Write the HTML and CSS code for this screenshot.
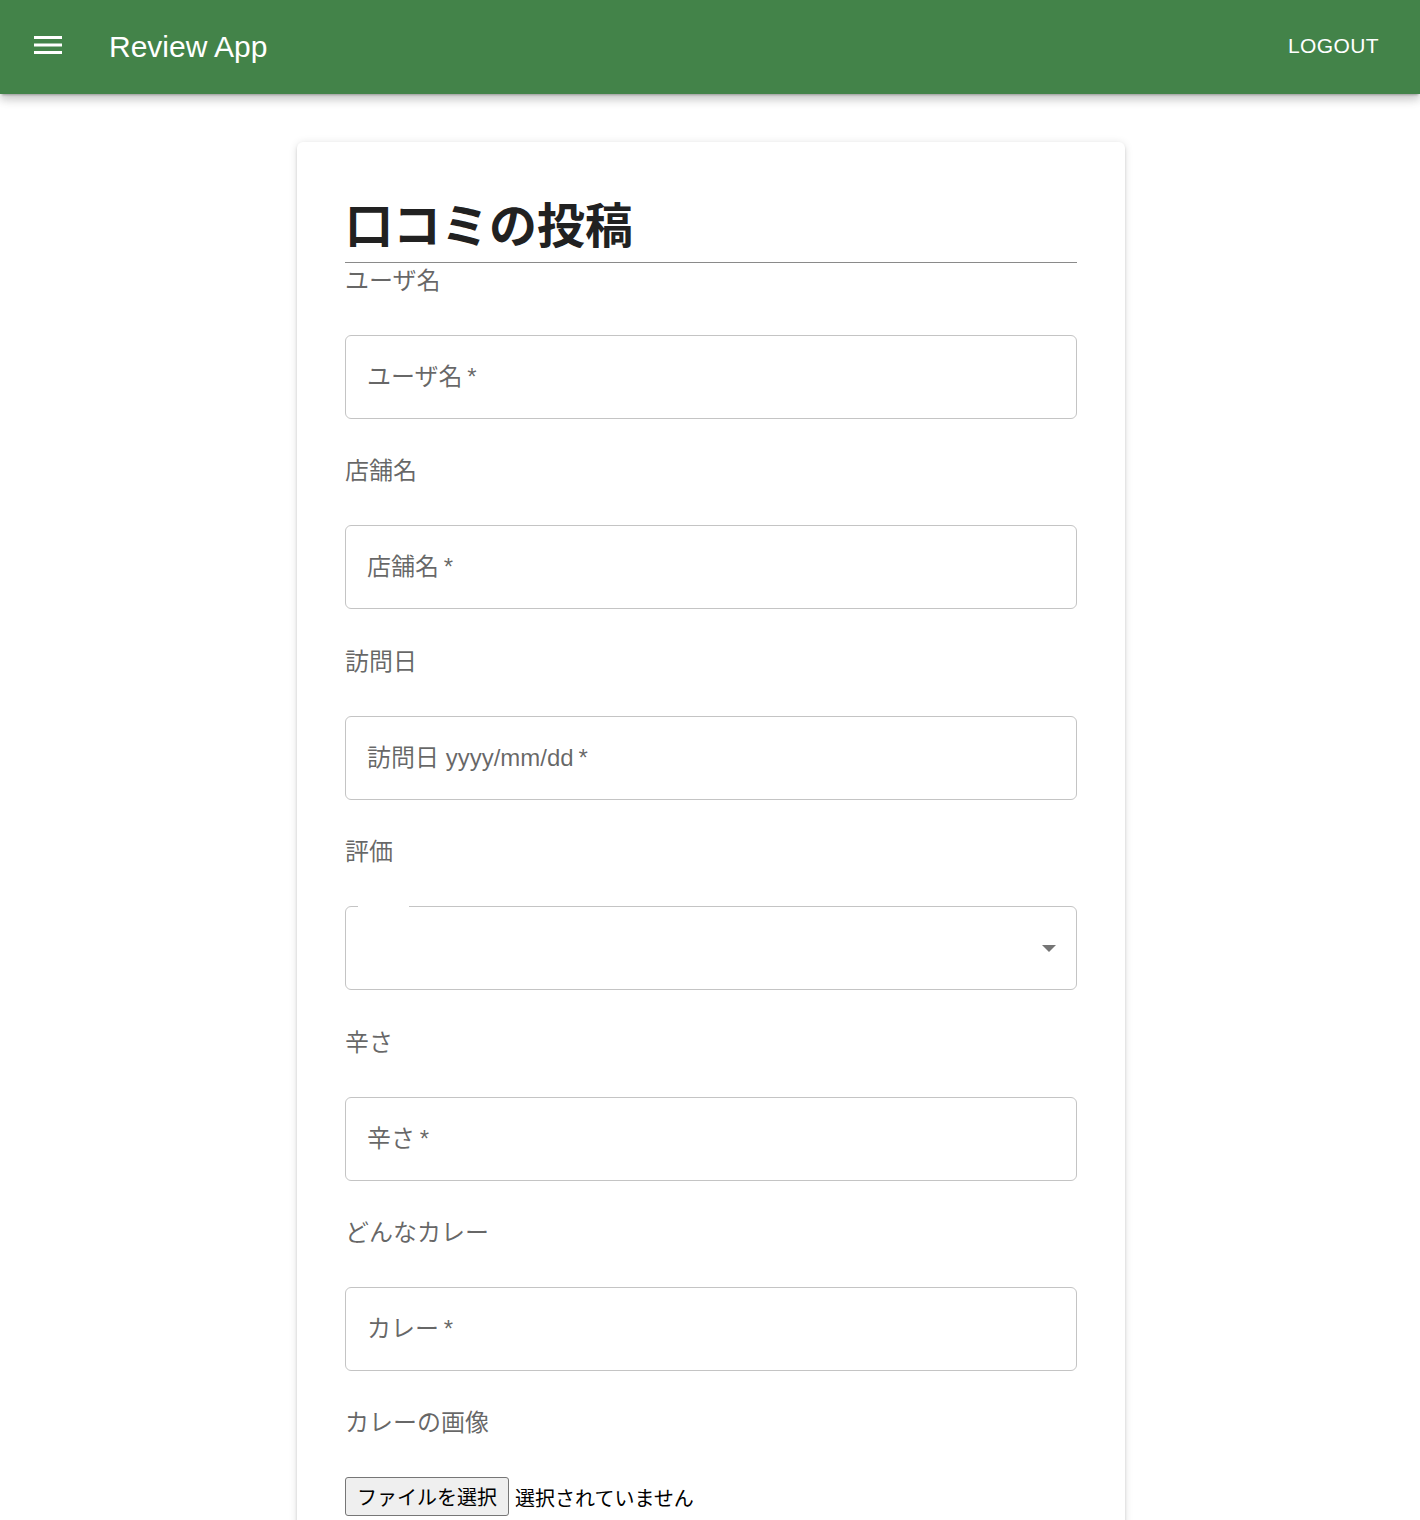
FILE: index.html
```html
<!DOCTYPE html>
<html lang="ja">
<head>
<meta charset="utf-8">
<title>Review App</title>
<link rel="stylesheet" href="styles.css">
</head>
<body>
<header class="appbar">
  <button class="menu-btn" aria-label="menu">
    <svg width="28" height="18" viewBox="0 0 28 18"><rect x="0" y="0" width="28" height="3" fill="#fff"/><rect x="0" y="7.5" width="28" height="3" fill="#fff"/><rect x="0" y="15" width="28" height="3" fill="#fff"/></svg>
  </button>
  <div class="app-title">Review App</div>
  <div class="spacer"></div>
  <button class="logout">LOGOUT</button>
</header>
<main class="page">
  <section class="card">
    <h1 class="card-title">口コミの投稿</h1>
    <div class="field">
      <div class="field-label">ユーザ名</div>
      <div class="outlined"><span class="ph">ユーザ名&thinsp;*</span></div>
    </div>
    <div class="field">
      <div class="field-label">店舗名</div>
      <div class="outlined"><span class="ph">店舗名&thinsp;*</span></div>
    </div>
    <div class="field">
      <div class="field-label">訪問日</div>
      <div class="outlined"><span class="ph">訪問日 yyyy/mm/dd&thinsp;*</span></div>
    </div>
    <div class="field">
      <div class="field-label">評価</div>
      <div class="outlined select"><span class="notch"></span><span class="arrow"></span></div>
    </div>
    <div class="field">
      <div class="field-label">辛さ</div>
      <div class="outlined"><span class="ph">辛さ&thinsp;*</span></div>
    </div>
    <div class="field">
      <div class="field-label">どんなカレー</div>
      <div class="outlined"><span class="ph">カレー&thinsp;*</span></div>
    </div>
    <div class="field">
      <div class="field-label">カレーの画像</div>
      <div class="file-row"><span class="file-btn">ファイルを選択</span><span class="file-status">選択されていません</span></div>
    </div>
  </section>
</main>
</body>
</html>
```
FILE: styles.css
```css
* { box-sizing: border-box; }
html, body { margin: 0; padding: 0; background: #fff; }
body { font-family: "Liberation Sans", "Noto Sans CJK JP", sans-serif; color: rgba(0,0,0,0.87); }

.appbar {
  height: 94px;
  background: #438349;
  display: flex;
  align-items: center;
  padding: 0 41px 0 34px;
  box-shadow: 0 3px 2px -2px rgba(0,0,0,0.25), 0 6px 8px 0 rgba(0,0,0,0.14), 0 2px 14px 0 rgba(0,0,0,0.12);
  position: relative;
  z-index: 2;
}
.menu-btn {
  background: none; border: 0; padding: 0; margin: 0;
  width: 28px; height: 18px; display: flex; margin-top: -4px;
}
.app-title {
  margin-left: 47px;
  color: #fff;
  font-family: "Liberation Sans", sans-serif;
  font-size: 30px;
  font-weight: 400;
  margin-top: -1px;
}
.spacer { flex: 1; }
.logout {
  background: none; border: 0; padding: 0;
  color: #fff;
  font-family: "Liberation Sans", sans-serif;
  font-size: 21px;
  font-weight: 400;
  letter-spacing: 0.4px;
  margin-top: -2px;
}

.page {
  display: flex;
  justify-content: center;
  padding-top: 48px;
  padding-left: 2px;
}
.card {
  width: 828px;
  background: #fff;
  border-radius: 6px;
  padding: 48px 48px 48px;
  box-shadow: 0 3px 2px -2px rgba(0,0,0,0.2), 0 2px 3px 0 rgba(0,0,0,0.14), 0 1px 8px 0 rgba(0,0,0,0.12);
}
.card-title {
  margin: 5px 0 0;
  font-family: "Noto Sans CJK JP", sans-serif;
  font-size: 48px;
  font-weight: 700;
  line-height: 54px;
  padding-bottom: 13px;
  border-bottom: 1px solid #8a8a8a;
  color: #212121;
}
.field { margin-bottom: 34.4px; }
.field-label {
  font-size: 24px;
  line-height: 32px;
  color: rgba(0,0,0,0.6);
  padding-top: 2px;
  margin-bottom: 38px;
}
.outlined {
  position: relative;
  height: 84px;
  border: 1px solid #c4c4c4;
  border-radius: 6px;
  display: flex;
  align-items: center;
  padding: 0 21px;
}
.ph {
  font-size: 24px;
  color: rgba(0,0,0,0.6);
  margin-top: -5px;
}
.select .notch {
  position: absolute;
  left: 12px;
  top: -1px;
  width: 51px;
  height: 1px;
  background: #fff;
}
.select .arrow {
  position: absolute;
  right: 20px;
  top: 38px;
  width: 0; height: 0;
  border-left: 7px solid transparent;
  border-right: 7px solid transparent;
  border-top: 7px solid #757575;
}
.file-row {
  display: flex;
  align-items: center;
}
.file-btn {
  height: 39px;
  padding: 0 11px;
  display: flex;
  align-items: center;
  font-size: 20px;
  color: #000;
  background: #efefef;
  border: 1px solid #767676;
  border-radius: 3px;
}
.file-status {
  margin-left: 6px;
  font-size: 20px;
  color: #000;
  margin-top: 2px;
}
```
